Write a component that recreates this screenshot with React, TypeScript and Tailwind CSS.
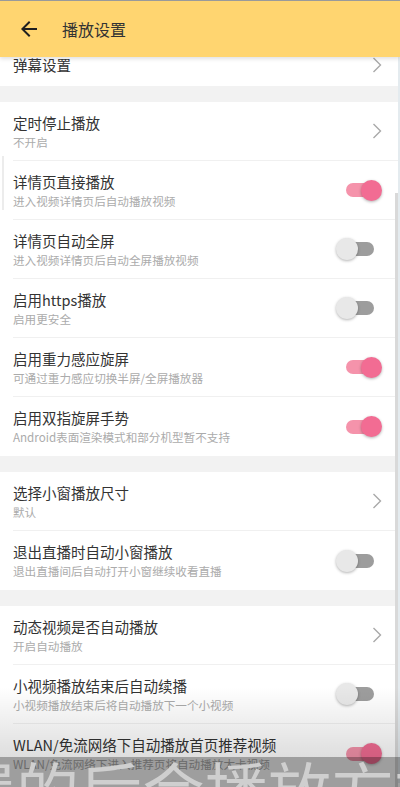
import React from "react";

type Item = {
  title: string;
  sub?: string;
  kind: "arrow" | "on" | "off";
};

const sections: Item[][] = [
  [
    { title: "定时停止播放", sub: "不开启", kind: "arrow" },
    { title: "详情页直接播放", sub: "进入视频详情页后自动播放视频", kind: "on" },
    { title: "详情页自动全屏", sub: "进入视频详情页后自动全屏播放视频", kind: "off" },
    { title: "启用https播放", sub: "启用更安全", kind: "off" },
    { title: "启用重力感应旋屏", sub: "可通过重力感应切换半屏/全屏播放器", kind: "on" },
    { title: "启用双指旋屏手势", sub: "Android表面渲染模式和部分机型暂不支持", kind: "on" },
  ],
  [
    { title: "选择小窗播放尺寸", sub: "默认", kind: "arrow" },
    { title: "退出直播时自动小窗播放", sub: "退出直播间后自动打开小窗继续收看直播", kind: "off" },
  ],
  [
    { title: "动态视频是否自动播放", sub: "开启自动播放", kind: "arrow" },
    { title: "小视频播放结束后自动续播", sub: "小视频播放结束后将自动播放下一个小视频", kind: "off" },
    {
      title: "WLAN/免流网络下自动播放首页推荐视频",
      sub: "WLAN/免流网络下进入推荐页将自动播放大卡视频",
      kind: "on",
    },
  ],
];

function Chevron() {
  return (
    <svg width="10" height="16" viewBox="0 0 10 16" className="shrink-0">
      <polyline points="1.5,1 8.5,8 1.5,15" fill="none" stroke="#a9a9a9" strokeWidth="1.4" />
    </svg>
  );
}

function Toggle({ on }: { on: boolean }) {
  return (
    <div className="relative h-[24px] w-[46px] shrink-0">
      {on ? (
        <>
          <div className="absolute left-[10px] top-[5px] h-[14px] w-[30px] rounded-full bg-[#f593ab]" />
          <div className="absolute left-[25px] top-[1.5px] h-[21px] w-[21px] rounded-full bg-[#f26c93] shadow-[0_1px_3px_rgba(0,0,0,0.3)]" />
        </>
      ) : (
        <>
          <div className="absolute left-[12px] top-[5px] h-[14px] w-[26px] rounded-full bg-[#9d9d9d]" />
          <div className="absolute left-0 top-[1px] h-[22px] w-[22px] rounded-full bg-[#e8e8e8] shadow-[0_1px_3px_rgba(0,0,0,0.3)]" />
        </>
      )}
    </div>
  );
}

function Row({ item, last }: { item: Item; last: boolean }) {
  return (
    <div className="pl-[13px]">
      <div
        className={
          "flex h-[59px] items-center justify-between pr-[16px] " +
          (last ? "" : "border-b border-[#f0f0f0]")
        }>
        <div className="flex flex-col">
          <span className="text-[14.5px] leading-[20px] text-[#333]">{item.title}</span>
          {item.sub && (
            <span className="mt-[1px] text-[11.6px] leading-[16px] text-[#ababab]">{item.sub}</span>
          )}
        </div>
        {item.kind === "arrow" ? <Chevron /> : <Toggle on={item.kind === "on"} />}
      </div>
    </div>
  );
}

export default function App() {
  return (
    <div
      className="relative h-[787px] w-[400px] overflow-hidden bg-white"
      style={{ fontFamily: '"Noto Sans CJK SC", "Noto Sans", sans-serif' }}>
      <header className="relative z-10 flex h-[57px] items-center border-t border-[#9a9a9a] bg-[#ffd570] shadow-[0_2px_4px_rgba(0,0,0,0.12)]">
        <svg width="24" height="24" viewBox="0 0 24 24" className="ml-[17px]">
          <path d="M20 11H7.83l5.59-5.59L12 4l-8 8 8 8 1.41-1.41L7.83 13H20v-2z" fill="#1f1f1f" />
        </svg>
        <h1 className="ml-[21px] text-[16px] text-[#333]">播放设置</h1>
      </header>

      <div className="border-r-2 border-[#e4ebef]">
        <div className="flex h-[29px] items-start justify-between pl-[13px] pr-[16px]">
          <span className="text-[14.5px] leading-[16px] text-[#333]">弹幕设置</span>
          <Chevron />
        </div>

        {sections.map((sec, i) => (
          <div key={i}>
            <div className="h-[16px] bg-[#f2f2f2]" />
            {sec.map((item, j) => (
              <Row key={item.title} item={item} last={j === sec.length - 1} />
            ))}
          </div>
        ))}
      </div>

      {/* scrollbar */}
      <div className="absolute right-[2px] top-[193px] h-[600px] w-[3px] bg-[#d9d9d9]" />
      <div className="absolute left-[2px] top-[156px] h-[54px] w-[2px] bg-[#ececec]" />

      {/* bottom video caption overlay */}
      <div className="absolute bottom-[30px] left-0 h-[70px] w-full bg-gradient-to-b from-transparent to-[rgba(0,0,0,0.13)]" />
      <div className="absolute bottom-0 left-0 h-[30px] w-full overflow-hidden bg-[rgba(0,0,0,0.38)]">
        <div className="ml-[-47px] mt-[-1px] whitespace-nowrap text-[63px] leading-none text-[#cfcfcf]">
          置的后会播放方式
        </div>
      </div>
    </div>
  );
}
